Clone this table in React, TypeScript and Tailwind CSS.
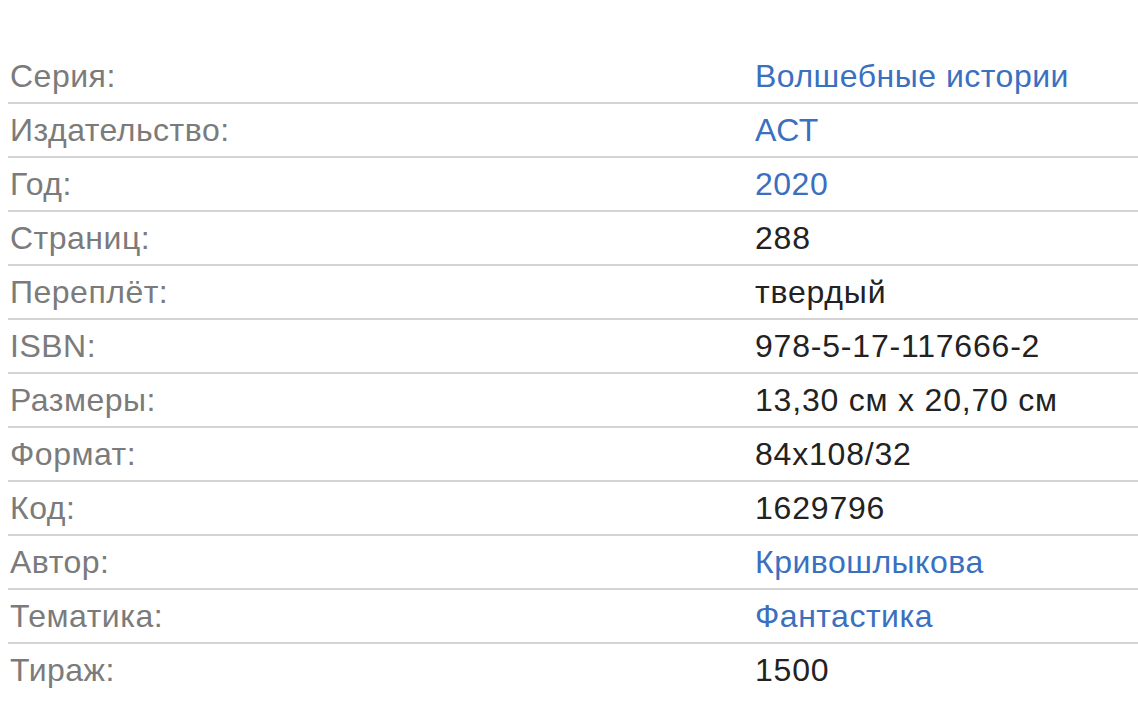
const rows: { label: string; value: string; link?: boolean }[] = [
  { label: "Серия:", value: "Волшебные истории", link: true },
  { label: "Издательство:", value: "АСТ", link: true },
  { label: "Год:", value: "2020", link: true },
  { label: "Страниц:", value: "288" },
  { label: "Переплёт:", value: "твердый" },
  { label: "ISBN:", value: "978-5-17-117666-2" },
  { label: "Размеры:", value: "13,30 см x 20,70 см" },
  { label: "Формат:", value: "84x108/32" },
  { label: "Код:", value: "1629796" },
  { label: "Автор:", value: "Кривошлыкова", link: true },
  { label: "Тематика:", value: "Фантастика", link: true },
  { label: "Тираж:", value: "1500" },
];

export default function App() {
  return (
    <div className="min-h-screen bg-white pt-[50px] pl-2 font-['Liberation_Sans',Arial,sans-serif]">
      <dl>
        {rows.map((row, i) => (
          <div
            key={row.label}
            className={`grid grid-cols-[747px_1fr] items-center h-[52px] text-[32px] leading-none tracking-[0.5px] ${
              i > 0 ? "border-t-2 border-[#d4d4d4] h-[54px]" : ""
            }`}
          >
            <dt className="pl-[2px] text-[#7b7b7b]">{row.label}</dt>
            <dd
              className={
                row.link ? "text-[#3b6fc0]" : "text-[#222222] tracking-[0.8px]"
              }
            >
              {row.value}
            </dd>
          </div>
        ))}
      </dl>
    </div>
  );
}
